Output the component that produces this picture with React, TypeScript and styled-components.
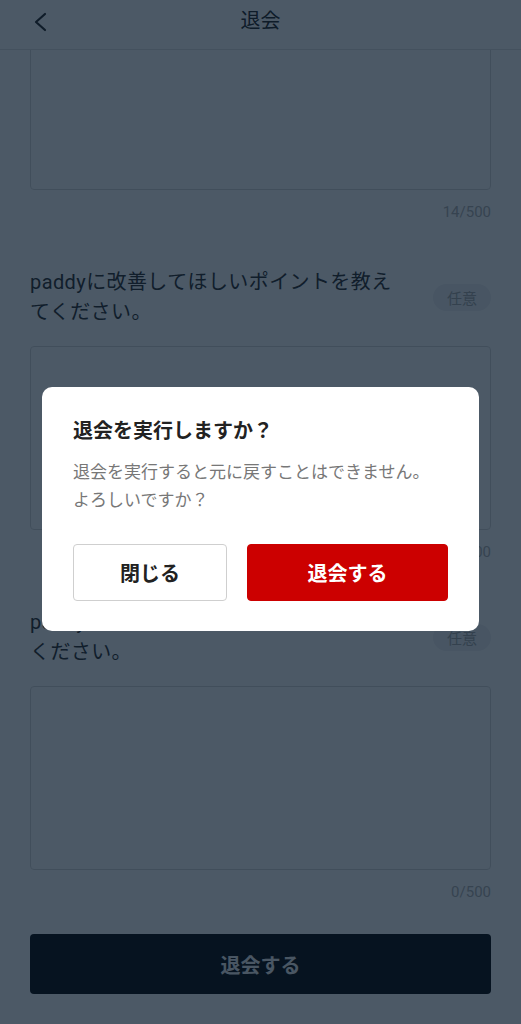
import React, { useLayoutEffect, useRef } from 'react';
import styled, { createGlobalStyle } from 'styled-components';

const GlobalStyle = createGlobalStyle`
  html, body {
    margin: 0;
    padding: 0;
    background: #fff;
  }
  body {
    font-family: Roboto, "Noto Sans CJK JP", "Noto Sans", sans-serif;
    color: #333;
  }
  * {
    box-sizing: border-box;
  }
`;

interface IQuestion {
  id: string;
  label: string | null;
  value: string;
}

// the first question has been scrolled past: only the bottom of its field shows
const questions: IQuestion[] = [
  { id: 'reason', label: null, value: '使う機会があまりなかったため' },
  { id: 'improve', label: 'paddyに改善してほしいポイントを教えてください。', value: '' },
  { id: 'opinion', label: 'paddyへのご意見やご感想などを教えてください。', value: '' },
];

const BackIcon: React.FC = () => (
  <svg width="14" height="20" viewBox="0 0 14 20" fill="none">
    <path d="M12 2 3 10l9 8" stroke="#222" strokeWidth="2.2" strokeLinecap="round" strokeLinejoin="round" />
  </svg>
);

export default function App() {
  const scrollRef = useRef<HTMLDivElement>(null);

  useLayoutEffect(() => {
    if (scrollRef.current) scrollRef.current.scrollTop = 74;
  }, []);

  return (
    <>
      <GlobalStyle />
      <Screen>
        <Header>
          <BackButton aria-label="戻る">
            <BackIcon />
          </BackButton>
          <Title>退会</Title>
        </Header>
        <Scroll ref={scrollRef}>
          <Content>
            {questions.map((q) => (
              <Question key={q.id}>
                {q.label && (
                  <LabelRow>
                    <Label>{q.label}</Label>
                    <Badge>任意</Badge>
                  </LabelRow>
                )}
                <TextArea readOnly aria-label={q.id} defaultValue={q.value} />
                <Counter>{q.value.length}/500</Counter>
              </Question>
            ))}
            <SubmitButton disabled>退会する</SubmitButton>
          </Content>
        </Scroll>
      </Screen>

      <Overlay>
        <Dialog role="dialog">
          <DialogTitle>退会を実行しますか？</DialogTitle>
          <DialogText>
            退会を実行すると元に戻すことはできません。
            <br />
            よろしいですか？
          </DialogText>
          <DialogActions>
            <ActionButton $variant="secondary">閉じる</ActionButton>
            <ActionButton $variant="danger">退会する</ActionButton>
          </DialogActions>
        </Dialog>
      </Overlay>
    </>
  );
}

const Screen = styled.div`
  display: flex;
  flex-direction: column;
  height: 100vh;
  background: #fff;
`;

const Header = styled.header`
  flex-shrink: 0;
  position: relative;
  display: flex;
  align-items: center;
  justify-content: center;
  height: 50px;
  padding-bottom: 7px;
  border-bottom: 1px solid #e2e2e2;
  background: #fff;
`;

const BackButton = styled.button`
  position: absolute;
  left: 33px;
  top: 12px;
  display: flex;
  padding: 0;
  border: 0;
  background: none;
`;

const Title = styled.h1`
  margin: 0;
  font-size: 20px;
  font-weight: 400;
  line-height: 28px;
  color: #222;
`;

const Scroll = styled.div`
  flex: 1;
  overflow: hidden;
`;

const Content = styled.main`
  display: flex;
  flex-direction: column;
  padding: 30px 30px 40px;
`;

const Question = styled.section`
  display: flex;
  flex-direction: column;
  margin-bottom: 45px;

  &:last-of-type {
    margin-bottom: 32px;
  }
`;

const LabelRow = styled.div`
  display: flex;
  align-items: center;
  gap: 30px;
  min-height: 60px;
  margin-bottom: 19px;
`;

const Label = styled.p`
  flex: 1;
  margin: 0;
  font-size: 20px;
  line-height: 30px;
  letter-spacing: 0.4px;
  color: #2a2a2a;
`;

const Badge = styled.span`
  flex-shrink: 0;
  display: inline-flex;
  align-items: center;
  justify-content: center;
  width: 58px;
  height: 27px;
  border-radius: 14px;
  background: #eef0f2;
  color: #a8a8a8;
  font-size: 15px;
`;

const TextArea = styled.textarea`
  display: block;
  width: 100%;
  height: 184px;
  padding: 10px 12px;
  border: 1px solid #d8d8d8;
  border-radius: 4px;
  resize: none;
  font-family: inherit;
  font-size: 17px;
  color: #333;
  background: #fff;
  outline: none;
`;

const Counter = styled.div`
  margin-top: 12px;
  text-align: right;
  font-size: 15px;
  line-height: 20px;
  color: #b0b0b0;
`;

const SubmitButton = styled.button`
  height: 60px;
  border: 0;
  border-radius: 4px;
  background: #000;
  color: #f4f4f4;
  font-family: inherit;
  font-size: 20px;
  font-weight: 700;
`;

const Overlay = styled.div`
  position: fixed;
  inset: 0;
  display: flex;
  align-items: center;
  justify-content: center;
  padding-bottom: 6px;
  background: rgba(8, 26, 44, 0.725);
`;

const Dialog = styled.div`
  width: 437px;
  padding: 31px 31px 30px;
  border-radius: 10px;
  background: #fff;
`;

const DialogTitle = styled.h2`
  margin: 0 0 13px;
  font-size: 20px;
  font-weight: 700;
  line-height: 27px;
  color: #222;
`;

const DialogText = styled.p`
  margin: 0 0 30px;
  font-size: 17px;
  line-height: 28px;
  color: #777;
`;

const DialogActions = styled.div`
  display: flex;
  gap: 20px;
`;

const ActionButton = styled.button<{ $variant: 'secondary' | 'danger' }>`
  flex: ${({ $variant }) => ($variant === 'danger' ? 4 : 3)};
  height: 57px;
  border-radius: 4px;
  border: 1px solid ${({ $variant }) => ($variant === 'danger' ? '#cc0000' : '#cfcfcf')};
  background: ${({ $variant }) => ($variant === 'danger' ? '#cc0000' : '#fff')};
  color: ${({ $variant }) => ($variant === 'danger' ? '#fff' : '#222')};
  font-family: inherit;
  font-size: 20px;
  font-weight: 700;
`;
